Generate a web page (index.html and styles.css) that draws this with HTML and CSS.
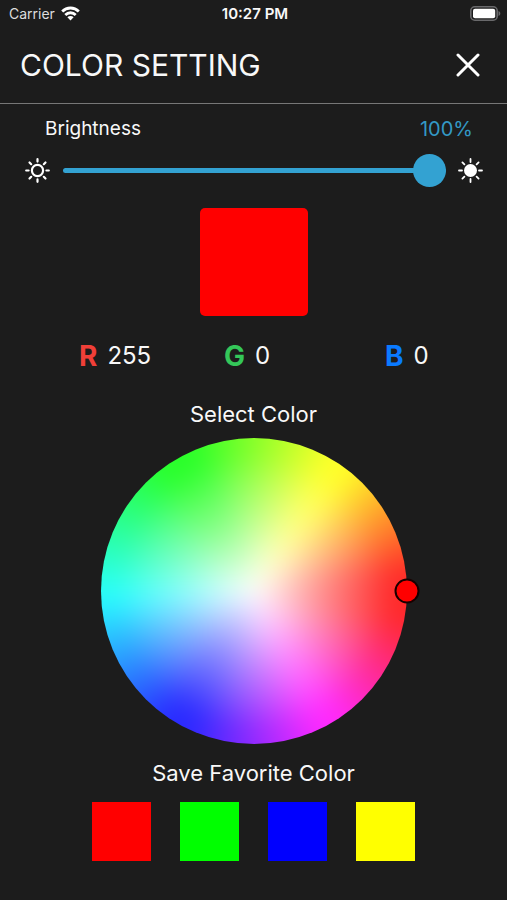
FILE: index.html
```html
<!DOCTYPE html>
<html lang="en">
<head>
<meta charset="utf-8">
<meta name="viewport" content="width=device-width, initial-scale=1">
<title>Color Setting</title>
<link rel="stylesheet" href="styles.css">
</head>
<body>
<div class="status">
  <div class="carrier">
    <span>Carrier</span>
    <svg width="19" height="15" viewBox="0 0 19 15" aria-hidden="true">
      <g fill="none" stroke="#fff" stroke-width="2.8">
        <path d="M1.2 5.4a11.8 11.8 0 0 1 16.6 0"/>
        <path d="M4.3 8.900a7.4 7.4 0 0 1 10.4 0"/>
      </g>
      <path fill="#fff" d="M6.400 11.200a4.400 4.400 0 0 1 6.200 0L9.500 14.400z"/>
    </svg>
  </div>
  <span class="time">10:27 PM</span>
  <svg class="battery" width="31" height="15" viewBox="0 0 31 15" aria-hidden="true">
    <rect x=".8" y=".8" width="26.400" height="13.400" rx="4" fill="none" stroke="#69696b" stroke-width="1.600"/>
    <rect x="3" y="2.700" width="22.200" height="9.600" rx="2" fill="#fff"/>
    <path d="M28.500 5c2.400.8 2.400 4.200 0 5z" fill="#69696b"/>
  </svg>
</div>
<header class="header">
  <h1>COLOR SETTING</h1>
  <button class="close" type="button" aria-label="Close">
    <svg width="24" height="24" viewBox="0 0 24 24"><path d="M2 2l20 20M22 2L2 22" stroke="#fff" stroke-width="3" stroke-linecap="round"/></svg>
  </button>
</header>
<main>
  <div class="brightness-head">
    <label for="brightness">Brightness</label>
    <output for="brightness">100%</output>
  </div>
  <div class="brightness-row">
    <svg width="25" height="25" viewBox="0 0 25 25" aria-hidden="true">
      <g fill="none" stroke="#fff" stroke-width="2.200" stroke-linecap="round">
        <circle cx="12.500" cy="12.500" r="5.600"/>
        <path d="M12.500 1.200v2.400M12.500 21.400v2.400M1.200 12.500h2.400M21.400 12.500h2.400M4.500 4.500l1.700 1.700M18.800 18.800l1.700 1.700M4.500 20.500l1.700-1.700M18.800 6.200l1.700-1.700"/>
      </g>
    </svg>
    <input id="brightness" type="range" min="0" max="100" value="100">
    <svg width="25" height="25" viewBox="0 0 25 25" aria-hidden="true">
      <circle cx="12.500" cy="12.500" r="6.500" fill="#fff"/>
      <path fill="none" stroke="#fff" stroke-width="1.800" stroke-linecap="round" d="M12.500 1v3M12.500 21v3M1 12.500h3M21 12.500h3M4.400 4.400l2 2M18.600 18.600l2 2M4.400 20.600l2-2M18.600 6.400l2-2"/>
    </svg>
  </div>
  <div class="preview"></div>
  <dl class="rgb">
    <div><dt class="r">R</dt><dd>255</dd></div>
    <div><dt class="g">G</dt><dd>0</dd></div>
    <div><dt class="b">B</dt><dd>0</dd></div>
  </dl>
  <h2>Select Color</h2>
  <div class="wheel">
    <div class="spectrum"></div>
    <button class="knob" type="button" aria-label="Selected color"></button>
  </div>
  <h2>Save Favorite Color</h2>
  <div class="favorites">
    <button class="swatch red" type="button" aria-label="Red"></button>
    <button class="swatch green" type="button" aria-label="Green"></button>
    <button class="swatch blue" type="button" aria-label="Blue"></button>
    <button class="swatch yellow" type="button" aria-label="Yellow"></button>
  </div>
</main>
</body>
</html>
```
FILE: styles.css
```css
* { box-sizing: border-box; }
body {
  margin: 0;
  min-height: 100vh;
  background: #1c1c1c;
  color: #f8f8f8;
  font-family: Inter, "Liberation Sans", sans-serif;
}
svg { display: block; }
h1, h2, dl, dd { margin: 0; font-weight: 400; }
button { padding: 0; border: 0; background: none; cursor: pointer; }

.status {
  display: grid;
  grid-template-columns: 1fr auto 1fr;
  align-items: center;
  height: 27px;
  padding: 0 6px 0 9px;
  font-size: 14px;
}
.carrier { display: flex; align-items: center; gap: 6px; color: #ddd; }
.time { font-size: 15px; font-weight: 600; }
.battery { justify-self: end; }

.header {
  display: flex;
  align-items: center;
  justify-content: space-between;
  height: 77px;
  padding: 0 27px 0 20px;
  border-bottom: 1px solid #777;
}
h1 { font-size: 30px; }

.brightness-head {
  display: flex;
  justify-content: space-between;
  align-items: center;
  padding: 12px 34px 0 45px;
  font-size: 19px;
  line-height: 26px;
}
output { color: #3398c5; font-size: 20px; }
.brightness-row {
  display: flex;
  align-items: center;
  gap: 12px;
  padding: 12px 24px 0 25px;
}
input[type="range"] {
  appearance: none;
  flex: 1;
  min-width: 0;
  height: 33px;
  margin: 0 0 0 1px;
  background: none;
}
input::-webkit-slider-runnable-track {
  height: 5px;
  border-radius: 3px;
  background: #33a2d2;
}
input::-webkit-slider-thumb {
  appearance: none;
  width: 33px;
  height: 33px;
  margin-top: -14px;
  border-radius: 50%;
  background: #33a2d2;
}
.preview {
  width: 108px;
  height: 108px;
  margin: 21px auto 0;
  border-radius: 5px;
  background: #f00;
}
.rgb {
  display: grid;
  grid-template-columns: 145fr 161fr 122fr;
  margin-top: 23px;
  padding-left: 79px;
  line-height: 34px;
}
.rgb div { display: flex; align-items: center; gap: 10px; }
dt { font-size: 28px; font-weight: 700; }
dd { font-size: 24px; }
.r { color: #f03f38; }
.g { color: #34c759; }
.b { color: #0a7aff; }

h2 { margin-top: 25px; font-size: 22px; line-height: 32px; text-align: center; }

.wheel {
  position: relative;
  width: 306px;
  height: 306px;
  margin: 8px auto 0;
}
.spectrum {
  height: 100%;
  border-radius: 50%;
  overflow: hidden;
  position: relative;
}
/* Oversized so that the blur stays even up to the rim. */
.spectrum::before {
  content: "";
  position: absolute;
  inset: -40px;
  background:
    radial-gradient(circle, #fff, rgb(255 255 255 / .55) 70px, rgb(255 255 255 / .16) 140px),
    conic-gradient(from 90deg, #f00, #f00 10deg, #f0f 58deg, #f0f 64deg, #00f 115deg, #00f 124deg, #0ff 178deg, #0f0 234deg, #0f0 246deg, #ff0 300deg, #ff0 308deg, #f00 354deg, #f00);
  filter: blur(12px);
}
.knob {
  position: absolute;
  top: 50%;
  left: 100%;
  width: 25px;
  height: 25px;
  border: 2px solid #180000;
  border-radius: 50%;
  background: #f00;
  transform: translate(-50%, -50%);
}
.wheel + h2 { margin-top: 13px; }
.favorites {
  display: flex;
  justify-content: center;
  gap: 29px;
  margin-top: 13px;
}
.swatch { width: 59px; height: 59px; }
.red { background: #f00; }
.green { background: #0f0; }
.blue { background: #00f; }
.yellow { background: #ff0; }
```
